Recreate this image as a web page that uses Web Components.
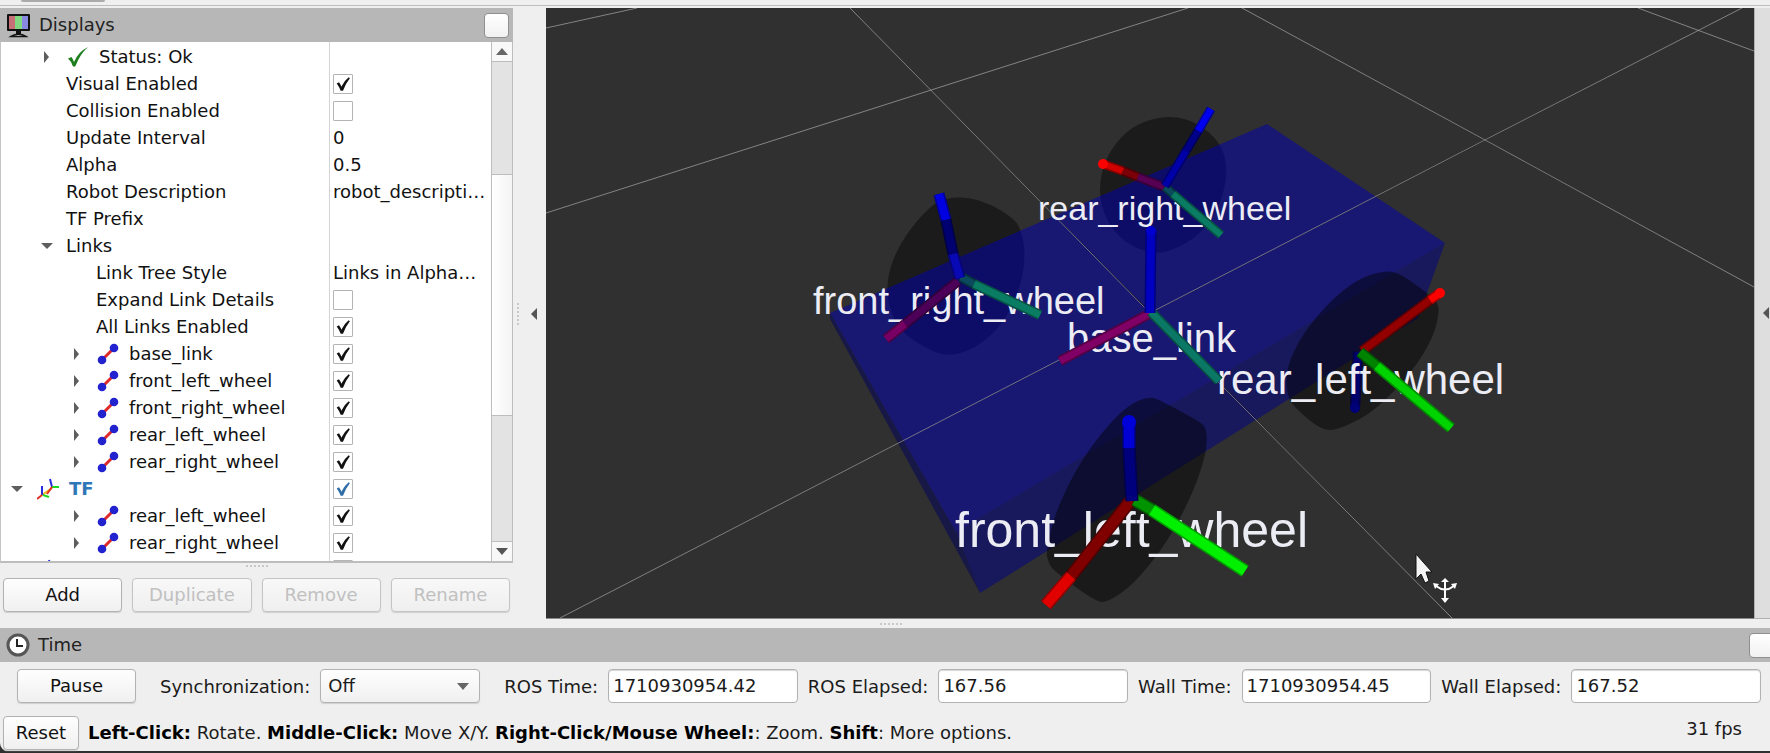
<!DOCTYPE html>
<html lang="en">
<head>
<meta charset="utf-8">
<title>RViz</title>
<style>
  html, body { height: 100%; }
  body { margin: 0; background: #303030; font: 18px/26px "DejaVu Sans", sans-serif; color: #1b1b1b; overflow: hidden; }
</style>
</head>
<body>
<rz-app></rz-app>

<script>
const define = (name, html, init) => {
  const template = document.createElement('template');
  template.innerHTML = html;
  customElements.define(name, class extends HTMLElement {
    constructor() {
      super();
      this.attachShadow({ mode: 'open' }).append(template.content.cloneNode(true));
    }
    connectedCallback() {
      if (init && !this.ready) { this.ready = true; init(this, this.shadowRoot); }
    }
  });
};

/* ---------- Push button ---------- */
define('rz-button', `
<style>
  :host { display: block; }
  button { box-sizing: border-box; width: 100%; height: 34px; margin: 0; padding: 0 10px;
    border: 1px solid #b2b2b2; border-radius: 4px; background: linear-gradient(#fefefe, #f0f0f0);
    box-shadow: 0 1px 1px #cfcfcf; font: inherit; color: #111; white-space: nowrap; }
  button:disabled { color: #c0c0c0; border-color: #c4c4c4; background: linear-gradient(#f8f8f8, #efefef); }
</style>
<button type="button"><slot></slot></button>`, (el, root) => {
  root.querySelector('button').disabled = el.hasAttribute('disabled');
});

/* ---------- Dock title bar ---------- */
define('rz-title', `
<style>
  :host { display: flex; align-items: center; gap: 8px; box-sizing: border-box; height: 34px; padding: 0 4px 0 6px;
    background: #b7b7b7; overflow: hidden; }
  h2 { flex: 1; margin: 0; font: inherit; color: #222; }
  ::slotted(svg) { display: block; flex: none; }
  button { flex: none; width: 25px; height: 25px; margin: 0; padding: 0; border: 1px solid #8f8f8f; border-radius: 4px;
    background: linear-gradient(#fff, #f1f1f1); }
  :host([cut]) button { margin-right: -8px; }
</style>
<slot name="icon"></slot><h2><slot></slot></h2><button type="button" aria-label="Float"></button>`);

/* ---------- Row of grip dots ---------- */
define('rz-grip', `
<style>
  :host { display: flex; justify-content: center; align-items: center; gap: 2px; }
  :host([vertical]) { flex-direction: column; }
  i { width: 2px; height: 2px; background: #c8c8c8; }
</style>
<i></i><i></i><i></i><i></i><i></i><i></i>`);

/* ---------- Labelled read-out ---------- */
define('rz-field', `
<style>
  :host { display: flex; flex: 1 1 auto; align-items: center; gap: 10px; min-width: 0; }
  label { white-space: nowrap; padding-top: 2px; }
  input { flex: 1; width: 40px; min-width: 0; box-sizing: border-box; height: 34px; margin: 0; padding: 0 4px 2px;
    border: 1px solid #b2b2b2; border-radius: 4px; background: #fff; box-shadow: inset 0 1px 1px #d8d8d8;
    font: inherit; color: #1b1b1b; }
</style>
<label for="v"></label><input id="v" type="text" readonly>`, (el, root) => {
  root.querySelector('label').textContent = el.getAttribute('label');
  root.querySelector('input').value = el.getAttribute('value');
});

/* ---------- Property tree ---------- */
const ICONS = {
  ok: `<svg width="22" height="22" viewBox="0 0 22 22"><path d="M1 12.500L4.500 11Q6 13 7 16Q11 6 21 1Q13 8 8.500 20Q6.500 21.500 5.500 19.500Q4 15 1 12.500Z" fill="#1d7f1d"/></svg>`,
  link: `<svg width="22" height="22" viewBox="0 0 22 22"><path d="M5 17L17 5" stroke="#dd2a2a" stroke-width="3"/><circle cx="5" cy="17" r="4.300" fill="#2222cf"/><circle cx="17" cy="5" r="4.300" fill="#2222cf"/></svg>`,
  tf: `<svg width="22" height="24" viewBox="1 0 22 24" fill="none" stroke-width="2"><path d="M16 11L6 18" stroke="#f0b020"/><path d="M6 18V9M16 10L14 2" stroke="#2a2ae0"/><path d="M16 10H24M7 18L13 20" stroke="#1fd81f"/><path d="M16 10L11 17M6 18L1 22" stroke="#e03020"/></svg>`
};
const ROWS = [
  { pad: 41, arrow: 'right', icon: 'ok', name: 'Status: Ok' },
  { pad: 66, name: 'Visual Enabled', check: true },
  { pad: 66, name: 'Collision Enabled', check: false },
  { pad: 66, name: 'Update Interval', value: '0' },
  { pad: 66, name: 'Alpha', value: '0.5' },
  { pad: 66, name: 'Robot Description', value: 'robot_descripti…' },
  { pad: 66, name: 'TF Prefix', value: '' },
  { pad: 41, arrow: 'down', name: 'Links' },
  { pad: 96, name: 'Link Tree Style', value: 'Links in Alpha…' },
  { pad: 96, name: 'Expand Link Details', check: false },
  { pad: 96, name: 'All Links Enabled', check: true },
  ...['base_link', 'front_left_wheel', 'front_right_wheel', 'rear_left_wheel', 'rear_right_wheel']
    .map(name => ({ pad: 71, arrow: 'right', icon: 'link', name, check: true })),
  { pad: 11, arrow: 'down', icon: 'tf', name: 'TF', check: true, display: true },
  ...['rear_left_wheel', 'rear_right_wheel']
    .map(name => ({ pad: 71, arrow: 'right', icon: 'link', name, check: true })),
  { pad: 36, icon: 'tf', name: '', check: false }
];
define('rz-tree', `
<style>
  :host { display: flex; background: #fff; border-left: 1px solid #c4c4c4; border-bottom: 2px solid #bdbdbd; overflow: hidden; color: #111; }
  .view { flex: 1; min-width: 0; overflow: hidden; background: linear-gradient(#d4d4d4, #d4d4d4) 328px 0 / 1px 100% no-repeat; }
  table { width: 100%; margin-top: 1px; border-collapse: collapse; table-layout: fixed; }
  tr { height: 27px; }
  td { height: 27px; padding: 0; overflow: hidden; white-space: nowrap; line-height: 26px; }
  td.name { width: 328px; }
  td.value { padding-left: 4px; }
  .cell { display: flex; align-items: center; height: 27px; box-sizing: border-box; }
  .arrow { display: block; flex: none; width: 12px; }
  .arrow + label { margin-left: 13px; }
  .icon { display: flex; flex: none; margin-left: 14px; }
  .icon + label { margin-left: 10px; }
  .display { font-weight: bold; color: #2f78b8; }
  input { appearance: none; display: block; box-sizing: border-box; width: 20px; height: 20px; margin: 0;
    border: 1px solid #b4b4b4; border-radius: 1px; background: #fff center / 16px 16px no-repeat; }
  input:checked { background-image: url("data:image/svg+xml,%3Csvg xmlns='http://www.w3.org/2000/svg' viewBox='0 0 14 14'%3E%3Cpath d='M1.500 6.500L3.500 5.500Q5 7.500 5.500 9.500Q8 4 12 1L13 2Q9 7 7 13H5Q3.500 9 1.500 6.500Z' fill='%23111'/%3E%3C/svg%3E"); }
  .display-on input:checked { background-image: url("data:image/svg+xml,%3Csvg xmlns='http://www.w3.org/2000/svg' viewBox='0 0 14 14'%3E%3Cpath d='M1.500 6.500L3.500 5.500Q5 7.500 5.500 9.500Q8 4 12 1L13 2Q9 7 7 13H5Q3.500 9 1.500 6.500Z' fill='%232f6ea8'/%3E%3C/svg%3E"); }
  .bar { flex: none; display: flex; flex-direction: column; width: 22px; box-sizing: border-box; border: solid #bdbdbd; border-width: 0 1px; background: #e3e3e3; }
  .bar button { display: flex; align-items: center; justify-content: center; height: 20px; margin: 0; padding: 0; border: 0; background: #f8f8f8; }
  .bar button:first-child { border-bottom: 1px solid #bdbdbd; }
  .bar button:last-child { border-top: 1px solid #bdbdbd; }
  .track { flex: 1; display: grid; grid-template-rows: 112fr 242fr 125fr; }
  .thumb { grid-row: 2; background: linear-gradient(90deg, #fff, #f4f4f4); border: solid #bdbdbd; border-width: 1px 0; }
</style>
<div class="view"><table aria-label="Displays"><tbody></tbody></table></div>
<div class="bar">
  <button type="button" aria-label="Scroll up"><svg width="12" height="7"><path d="M0 7L6 0L12 7Z" fill="#666"/></svg></button>
  <div class="track"><div class="thumb"></div></div>
  <button type="button" aria-label="Scroll down"><svg width="12" height="7"><path d="M0 0H12L6 7Z" fill="#555"/></svg></button>
</div>`, (el, root) => {
  const arrows = {
    right: '<svg class="arrow" height="12" viewBox="0 0 12 12"><path d="M3 0L8 6L3 12Z" fill="#5e5e5e"/></svg>',
    down: '<svg class="arrow" height="12" viewBox="0 0 12 12"><path d="M0 3H12L6 9Z" fill="#5e5e5e"/></svg>'
  };
  root.querySelector('tbody').innerHTML = ROWS.map((row, i) => {
    const tied = row.check !== undefined;
    const tag = row.name ? `<label${tied ? ` for="p${i}"` : ''}${row.display ? ' class="display"' : ''}>${row.name}</label>` : '';
    const value = tied
      ? `<input type="checkbox" id="p${i}"${row.check ? ' checked' : ''}${row.name ? '' : ' aria-label="Enabled"'}>`
      : (row.value || '');
    return `<tr><td class="name"><div class="cell" style="padding-left:${row.pad - 1}px">${row.arrow ? arrows[row.arrow] : ''}` +
      `${row.icon ? `<span class="icon"${row.arrow ? '' : ' style="margin-left:0"'}>${ICONS[row.icon]}</span>` : ''}${tag}</div></td>` +
      `<td class="value"><div class="cell${row.display ? ' display-on' : ''}">${value}</div></td></tr>`;
  }).join('');
});

/* ---------- Displays dock ---------- */
define('rz-displays', `
<style>
  :host { display: flex; flex-direction: column; flex: none; width: 513px; min-height: 0; }
  rz-tree { flex: 1; min-height: 0; }
  rz-grip { height: 6px; }
  .actions { display: grid; grid-template-columns: repeat(4, 1fr); gap: 10px; padding: 9px 3px 7px; }
</style>
<rz-title>
  <svg slot="icon" width="25" height="25" viewBox="0 0 25 25">
    <rect x="1" y="1" width="23" height="17" rx="1" fill="#111"/>
    <path d="M3 3H9V16H3Z" fill="#c87078"/><path d="M9 3H16V16H9Z" fill="#80d880"/><path d="M16 3H22V16H16Z" fill="#8888e0"/>
    <path d="M10 18H15V21H10Z" fill="#111"/><path d="M5 23.500Q12.500 19 20 23.500Z" fill="#eee" stroke="#111" stroke-width="1.500"/>
  </svg>Displays</rz-title>
<rz-tree></rz-tree>
<rz-grip></rz-grip>
<div class="actions">
  <rz-button>Add</rz-button><rz-button disabled>Duplicate</rz-button><rz-button disabled>Remove</rz-button><rz-button disabled>Rename</rz-button>
</div>`);

/* ---------- 3D view ---------- */
define('rz-view', `
<style>
  :host { display: block; flex: 1; min-width: 0; background: #303030; overflow: hidden; border-bottom: 1px solid #8a8a8a; }
  svg { display: block; width: 100%; height: 100%; }
  text { font-family: "Liberation Sans", Arial, sans-serif; fill: #ececf4; }
</style>
<svg viewBox="546 8 1208 610" preserveAspectRatio="xMidYMid slice" role="img" aria-label="Robot model">
  <g id="back" fill="#1b1b1b"></g>
  <path d="M830 313L1267 124L1445 243L956 532Z" fill="#0000b4" fill-opacity=".5"/>
  <path d="M956 532L1445 243L1418 318L980 593Z" fill="#000088" fill-opacity=".5"/>
  <path d="M830 313L956 532L980 593L830 319Z" fill="#00005e" fill-opacity=".5"/>
  <g id="front" fill="#000" fill-opacity=".46"></g>
  <g stroke="#c8c8c8" stroke-opacity=".55">
    <path d="M546 28L637 8M546 213L1188 8M850 8L1150 313L1452 618M1242 8L1485 140L1754 287M560 618L1150 313L1485 140L1742 8M1638 8L1754 51"/>
  </g>
  <g id="under"></g>
  <text x="813" y="314" font-size="38">front_right_wheel</text>
  <text x="1038" y="220" font-size="34">rear_right_wheel</text>
  <text x="1067" y="352" font-size="40">base_link</text>
  <text x="1217" y="394" font-size="42">rear_left_wheel</text>
  <text x="955" y="547" font-size="50">front_left_wheel</text>
  <g id="axes"></g>
  <path d="M1416 554V579L1421 574L1425 583L1429 581L1426 572H1432Z" fill="#f4f4f4" stroke="#111"/>
  <g stroke="#fff" stroke-width="2" fill="none"><path d="M1445 580V599M1436 586Q1445 593 1454 586"/></g>
  <path d="M1445 578L1449 582H1441ZM1445 603L1441 598H1449ZM1433 583L1439 584L1435 589ZM1457 583L1451 584L1455 589Z" fill="#fff"/>
</svg>`, (el, root) => {
  // Closed outline that rounds each corner between the midpoints of its sides.
  const smooth = pts => {
    const mid = (a, b) => [(a[0] + b[0]) / 2, (a[1] + b[1]) / 2];
    const n = pts.length;
    let d = 'M' + mid(pts[n - 1], pts[0]);
    pts.forEach((p, i) => { d += `Q${p} ${mid(p, pts[(i + 1) % n])}`; });
    return `<path d="${d}Z"/>`;
  };
  root.getElementById('back').innerHTML =
    smooth([[948,198],[968,197],[990,204],[1010,216],[1020,226],[1026,254],[1020,290],[1001,327],[974,349],[950,356],[933,352],[903,334],[890,312],[886,283],[896,250],[917,220],[936,202]]) +
    smooth([[1174,116],[1198,123],[1221,143],[1228,170],[1221,204],[1201,234],[1174,250],[1153,254],[1126,244],[1106,221],[1098,190],[1106,156],[1127,130],[1150,119]]);
  root.getElementById('front').innerHTML =
    smooth([[1148,397],[1158,399],[1180,411],[1202,423],[1206,429],[1207,440],[1205,457],[1193,493],[1167,543],[1133,585],[1108,602],[1096,602],[1054,571],[1048,562],[1046,550],[1056,510],[1080,462],[1107,426],[1130,404]]) +
    smooth([[1382,271],[1398,272],[1430,295],[1438,303],[1439,314],[1433,338],[1412,372],[1376,410],[1345,427],[1324,432],[1297,410],[1287,397],[1286,368],[1303,333],[1331,300],[1358,279]]);
  // A rod is a run of coloured pieces along one line: a shaded rim below a lighter core.
  const rod = (w, start, ...pieces) => {
    let out = '', from = start;
    for (const [x, y, color] of pieces) {
      const d = `M${from}L${x} ${y}`;
      out += `<path d="${d}" stroke="${color}" stroke-width="${w}"/><path d="${d}" stroke="#000" stroke-opacity=".35" stroke-width="${w}"/><path d="${d}" stroke="${color}" stroke-width="${w - 3}"/>`;
      from = [x, y];
    }
    return out;
  };
  const tip = (x, y, r, c) => `<circle cx="${x}" cy="${y}" r="${r}" fill="${c}"/>`;
  root.getElementById('under').innerHTML = rod(10, [1358,352], [1355,408,'#00006c']) + tip(1355, 408, 5, '#000078');
  root.getElementById('axes').innerHTML =
    rod(10, [958,281], [905,324,'#4c0058'], [886,339,'#780064']) +
    rod(10, [961,277], [974,284,'#0a4a5c'], [1040,315,'#0a7c64']) +
    rod(11, [939,194], [946,220,'#0000e0'], [953,254,'#000070'], [960,278,'#0808b4']) +
    rod(9, [1103,164], [1123,171,'#d00000'], [1138,177,'#7c0008'], [1164,187,'#580054']) + tip(1103, 164, 5, '#ff0000') +
    rod(9, [1165,187], [1173,194,'#0a4a5c'], [1221,235,'#0a7c64']) +
    rod(9, [1211,109], [1198,131,'#0000f0'], [1186,151,'#000088'], [1165,186,'#0000a8']) +
    rod(10, [1149,314], [1060,361,'#800066']) +
    rod(10, [1151,312], [1219,381,'#0a7864']) +
    rod(11, [1151,230], [1150,313,'#0000c0']) + tip(1151, 231, 5, '#0000d0') +
    rod(10, [1362,351], [1430,300,'#940000'], [1440,293,'#ff0000']) + tip(1440, 293, 5, '#ff0000') +
    rod(11, [1360,352], [1377,366,'#008400'], [1451,428,'#00d400']) +
    rod(13, [1131,500], [1071,576,'#800000'], [1046,605,'#e00000']) +
    rod(13, [1135,500], [1152,510,'#009400'], [1245,571,'#00f000']) +
    rod(13, [1132,501], [1129,448,'#00007c'], [1129,422,'#0000d4']) + tip(1129, 422, 7, '#0000d8');
});

/* ---------- Collapsed side handles ---------- */
define('rz-handle', `
<style>
  :host { display: flex; align-items: center; }
  button { display: flex; margin: 0; padding: 0; border: 0; background: none; }
</style>
<button type="button" aria-label="Toggle panel"><svg width="6" height="12"><path d="M6 0V12L0 6Z" fill="#555"/></svg></button>`);

/* ---------- Time panel ---------- */
define('rz-time', `
<style>
  :host { display: block; }
  .row { display: flex; align-items: center; gap: 10px; padding: 7px 9px 7px 17px; }
  rz-button { flex: none; width: 119px; }
  .sync { display: flex; align-items: center; gap: 10px; padding: 0 14px; }
  .sync label { padding-top: 2px; }
  .pick { position: relative; }
  select { appearance: none; display: block; box-sizing: border-box; width: 160px; height: 34px; padding: 0 7px; margin: 0;
    border: 1px solid #b2b2b2; border-radius: 4px; background: linear-gradient(#fefefe, #f0f0f0); box-shadow: 0 1px 1px #cfcfcf; font: inherit; color: #1b1b1b; }
  .pick svg { position: absolute; right: 11px; top: 14px; pointer-events: none; }
</style>
<rz-title cut>
  <svg slot="icon" width="24" height="26" viewBox="0 0 24 26"><circle cx="12" cy="13" r="10" fill="#fff" stroke="#555" stroke-width="3"/><path d="M11 7V14H17" fill="none" stroke="#222" stroke-width="2"/></svg>Time</rz-title>
<div class="row">
  <rz-button>Pause</rz-button>
  <div class="sync"><label for="sync">Synchronization:</label>
    <div class="pick"><select id="sync"><option>Off</option><option>Exact</option><option>Approximate</option></select>
      <svg width="12" height="7"><path d="M0 0H12L6 7Z" fill="#666"/></svg></div>
  </div>
  <rz-field label="ROS Time:" value="1710930954.42"></rz-field>
  <rz-field label="ROS Elapsed:" value="167.56"></rz-field>
  <rz-field label="Wall Time:" value="1710930954.45"></rz-field>
  <rz-field label="Wall Elapsed:" value="167.52"></rz-field>
</div>`);

/* ---------- Status bar ---------- */
define('rz-status', `
<style>
  :host { display: flex; align-items: center; gap: 9px; box-sizing: border-box; height: 41px; padding: 4px 28px 0 3px; }
  rz-button { flex: none; width: 76px; }
  p { flex: 1; margin: 0; white-space: nowrap; }
  b { color: #000; }
  output { padding-bottom: 8px; }
</style>
<rz-button>Reset</rz-button>
<p><b>Left-Click:</b> Rotate. <b>Middle-Click:</b> Move X/Y. <b>Right-Click/Mouse Wheel:</b>: Zoom. <b>Shift</b>: More options.</p>
<output>31 fps</output>`);

/* ---------- Window ---------- */
define('rz-app', `
<style>
  :host { display: flex; flex-direction: column; box-sizing: border-box; height: 100vh; border-bottom: 2px solid #303030; }
  .page { flex: 1; display: flex; flex-direction: column; min-height: 0; background: #efefef; border-bottom-left-radius: 8px; }
  .tools { height: 5px; padding-left: 21px; border-bottom: 1px solid #bdbdbd; margin-bottom: 2px; }
  .tools i { display: block; width: 84px; height: 2px; border-radius: 0 0 3px 3px; background: #ababab; }
  main { flex: 1; display: flex; min-height: 0; }
  .side { flex: none; width: 33px; display: flex; align-items: center; justify-content: space-between; box-sizing: border-box; padding: 0 9px 0 4px; }
  .edge { flex: none; width: 16px; box-sizing: border-box; padding-left: 8px; border-left: 1px solid #b0b0b0; border-bottom: 1px solid #b0b0b0; background: #dedede; }
  .split { height: 9px; padding-left: 12px; }
</style>
<div class="page">
  <div class="tools"><i></i></div>
  <main>
    <rz-displays></rz-displays>
    <div class="side"><rz-grip vertical></rz-grip><rz-handle></rz-handle></div>
    <rz-view></rz-view>
    <rz-handle class="edge"></rz-handle>
  </main>
  <rz-grip class="split"></rz-grip>
  <rz-time></rz-time>
  <rz-status></rz-status>
</div>`);
</script>
</body>
</html>
